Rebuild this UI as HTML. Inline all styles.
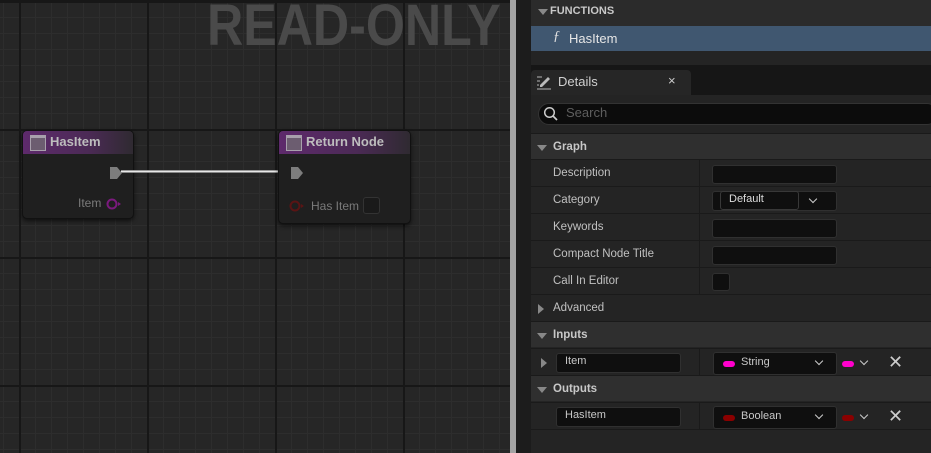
<!DOCTYPE html>
<html><head><style>
*{margin:0;padding:0;box-sizing:border-box}
body{width:931px;height:453px;overflow:hidden;background:#1c1c1c;font-family:"Liberation Sans",sans-serif;position:relative}
.abs{position:absolute}
#graph{left:0;top:0;width:510px;height:453px;background-color:#262626;
background-image:
linear-gradient(90deg,#171717 2px,transparent 2px),linear-gradient(#171717 2px,transparent 2px),
linear-gradient(90deg,#2d2d2d 1px,transparent 1px),linear-gradient(#2d2d2d 1px,transparent 1px);
background-size:128px 128px,128px 128px,16px 16px,16px 16px;
background-position:19px 0,0 1px,3px 0,0 1px;overflow:hidden}
.ro{left:207px;top:-8px;font-size:58px;font-weight:bold;color:#4a4a4a;transform:scaleX(.865);transform-origin:left top;white-space:nowrap}
.node{background:#1f1f1f;border:1px solid #111;border-radius:5px;box-shadow:0 2px 4px rgba(0,0,0,.6);overflow:hidden}
.nh{height:23px;background:linear-gradient(90deg,#5e2a6c,#4b2a55 60%,#2f2a31);color:#bdbdbd;font-weight:bold;font-size:13px;line-height:21px;padding-left:27px;position:relative}
.nh:before{content:"";position:absolute;left:7px;top:4px;width:14px;height:12px;border:1px solid #a8a0ac;border-top:3px solid #a8a0ac;background:#6c5d70}
.lbl{color:#7a7a7a;font-size:12px}
#panel{left:531px;top:0;width:400px;height:453px;background:#242424}
.txt{color:#c8c8c8;font-size:12px}
.row{position:absolute;left:0;width:400px;height:27px;border-top:1px solid #1a1a1a;background:#242424}
.row .k{position:absolute;left:22px;top:7px;color:#c0c0c0;font-size:11.5px}
.row .div{position:absolute;left:168px;top:0;width:1px;height:27px;background:#1a1a1a}
.box{position:absolute;background:#0f0f0f;border:1px solid #303030;border-radius:3px}
.hdr{position:absolute;left:0;width:400px;height:26px;background:#2f2f2f;border-top:1px solid #1a1a1a}
.hdr span{position:absolute;left:22px;top:7px;color:#c8c8c8;font-weight:bold;font-size:11.5px}
.tri{position:absolute;left:6px;top:11px;width:0;height:0;border-left:5px solid transparent;border-right:5px solid transparent;border-top:6px solid #888}
.trir{position:absolute;left:8px;top:9px;width:0;height:0;border-top:5px solid transparent;border-bottom:5px solid transparent;border-left:6px solid #888}
.chev{position:absolute;width:7px;height:7px;border-right:1.5px solid #ccc;border-bottom:1.5px solid #ccc;transform:rotate(45deg)}
.pill{position:absolute;width:12px;height:6px;border-radius:3px}
.x{position:absolute;color:#ccc;font-size:18px}
</style></head><body>
<div id="graph" class="abs">
<div class="abs" style="left:0;top:0;width:510px;height:2px;background:#171717"></div>
<div class="abs ro">READ-ONLY</div>
<div class="abs node" style="left:22px;top:130px;width:112px;height:89px">
<div class="nh">HasItem</div>
<svg class="abs" style="left:86px;top:35px" width="14" height="14"><path d="M1 1h7l5 6-5 6H1z" fill="#7d7d7d"/></svg>
<div class="abs lbl" style="left:55px;top:65px">Item</div>
<svg class="abs" style="left:83px;top:66px" width="16" height="14"><circle cx="6" cy="7" r="4.5" fill="none" stroke="#7b1a7e" stroke-width="2"/><path d="M12 5l3 2-3 2z" fill="#7b1a7e"/></svg>
</div>
<div class="abs" style="left:121px;top:170px;width:170px;height:3px;background:#e8e8e8;border-top:1px solid #999;border-bottom:1px solid #888"></div>
<div class="abs node" style="left:278px;top:130px;width:133px;height:94px">
<div class="nh">Return Node</div>
<svg class="abs" style="left:11px;top:35px" width="14" height="14"><path d="M1 1h7l5 6-5 6H1z" fill="#7d7d7d"/></svg>
<svg class="abs" style="left:10px;top:68px" width="16" height="14"><circle cx="6" cy="7" r="4.5" fill="none" stroke="#5a1414" stroke-width="2"/><path d="M12 5l3 2-3 2z" fill="#5a1414"/></svg>
<div class="abs lbl" style="left:32px;top:68px">Has Item</div>
<div class="abs" style="left:84px;top:66px;width:17px;height:17px;background:#1a1a1a;border:1px solid #333;border-radius:3px"></div>
</div>
</div>
<div class="abs" style="left:510px;top:0;width:6px;height:453px;background:#a3a3a3"></div>
<div class="abs" style="left:516px;top:0;width:15px;height:453px;background:#1c1c1c"></div>
<div id="panel" class="abs">
<div class="abs" style="left:0;top:0;width:400px;height:26px;background:#2b2b2b"></div>
<div class="abs" style="left:7px;top:9px;width:0;height:0;border-left:5px solid transparent;border-right:5px solid transparent;border-top:6px solid #888"></div>
<div class="abs" style="left:19px;top:5px;color:#c8c8c8;font-size:11px;font-weight:bold">FUNCTIONS</div>
<div class="abs" style="left:0;top:26px;width:400px;height:25px;background:#405770"></div>
<div class="abs" style="left:22px;top:29px;color:#e0e0e0;font-size:14px;font-style:italic;font-family:'Liberation Serif',serif">ƒ</div>
<div class="abs" style="left:38px;top:31px;color:#e6e6e6;font-size:13px">HasItem</div>
<div class="abs" style="left:0;top:51px;width:400px;height:14px;background:#242424"></div>
<div class="abs" style="left:0;top:65px;width:400px;height:30px;background:#161616"></div>
<div class="abs" style="left:0;top:70px;width:160px;height:26px;background:#262626;border-radius:4px 4px 0 0"></div>
<svg class="abs" style="left:4px;top:73px" width="18" height="18"><path d="M5 12l8-8 2 2-8 8H5z" fill="#bbb"/><path d="M2 4h5M2 8h3M2 12h2M2 16h14" stroke="#999" stroke-width="1.3"/></svg>
<div class="abs" style="left:27px;top:74px;color:#d0d0d0;font-size:13px">Details</div>
<div class="abs" style="left:137px;top:73px;color:#ccc;font-size:13px">×</div>
<div class="abs" style="left:0;top:95px;width:400px;height:38px;background:#242424"></div>
<div class="abs" style="left:7px;top:103px;width:400px;height:22px;background:#0c0c0c;border:1px solid #333;border-radius:11px"></div>
<svg class="abs" style="left:12px;top:106px" width="16" height="16"><circle cx="6.5" cy="6.5" r="4.8" fill="none" stroke="#ccc" stroke-width="1.5"/><path d="M10 10l4 4" stroke="#ccc" stroke-width="1.7"/></svg>
<div class="abs" style="left:35px;top:105px;color:#5e5e5e;font-size:13px">Search</div>
<div class="hdr" style="top:133px"><div class="tri"></div><span>Graph</span></div>
<div class="row" style="top:159px"><div class="k">Description</div><div class="div"></div><div class="box" style="left:181px;top:5px;width:125px;height:19px"></div></div>
<div class="row" style="top:186px"><div class="k">Category</div><div class="div"></div><div class="box" style="left:181px;top:4px;width:125px;height:20px"></div><div class="box" style="left:189px;top:4px;width:79px;height:19px;border-color:#383838"></div><div class="abs" style="left:198px;top:6px;color:#ddd;font-size:11px">Default</div><div class="chev" style="left:279px;top:9px;width:6px;height:6px"></div></div>
<div class="row" style="top:213px"><div class="k">Keywords</div><div class="div"></div><div class="box" style="left:181px;top:5px;width:125px;height:19px"></div></div>
<div class="row" style="top:240px"><div class="k">Compact Node Title</div><div class="div"></div><div class="box" style="left:181px;top:5px;width:125px;height:19px"></div></div>
<div class="row" style="top:267px"><div class="k">Call In Editor</div><div class="div"></div><div class="box" style="left:181px;top:5px;width:18px;height:18px"></div></div>
<div class="row" style="top:294px"><div class="trir" style="left:7px"></div><div class="k">Advanced</div></div>
<div class="hdr" style="top:321px"><div class="tri"></div><span>Inputs</span></div>
<div class="row" style="top:348px"><div class="trir" style="left:10px"></div><div class="div"></div>
<div class="box" style="left:25px;top:4px;width:125px;height:20px"></div><div class="abs txt" style="left:34px;top:6px;font-size:11px">Item</div>
<div class="box" style="left:182px;top:3px;width:124px;height:23px"></div><div class="pill" style="left:192px;top:12px;background:#f0c"></div><div class="abs txt" style="left:210px;top:7px;font-size:11px">String</div><div class="chev" style="left:285px;top:9px;width:6px;height:6px"></div>
<div class="pill" style="left:311px;top:12px;background:#f0c"></div><div class="chev" style="left:330px;top:9px;width:6px;height:6px"></div><div class="x" style="left:357px;top:3px">✕</div></div>
<div class="hdr" style="top:375px"><div class="tri"></div><span>Outputs</span></div>
<div class="row" style="top:402px"><div class="div"></div>
<div class="box" style="left:25px;top:4px;width:125px;height:20px"></div><div class="abs txt" style="left:34px;top:6px;font-size:11px">HasItem</div>
<div class="box" style="left:182px;top:3px;width:124px;height:23px"></div><div class="pill" style="left:192px;top:12px;background:#8a0000"></div><div class="abs txt" style="left:210px;top:7px;font-size:11px">Boolean</div><div class="chev" style="left:285px;top:9px;width:6px;height:6px"></div>
<div class="pill" style="left:311px;top:12px;background:#8a0000"></div><div class="chev" style="left:330px;top:9px;width:6px;height:6px"></div><div class="x" style="left:357px;top:3px">✕</div></div>
<div class="abs" style="left:0;top:429px;width:400px;height:24px;background:#242424;border-top:1px solid #1a1a1a"></div>
</div>
</body></html>
